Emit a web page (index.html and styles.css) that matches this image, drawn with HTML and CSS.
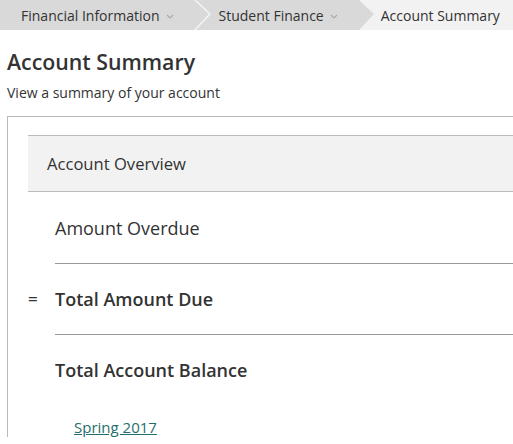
FILE: index.html
```html
<!DOCTYPE html>
<html lang="en">

<head>
    <meta charset="UTF-8">
    <title>Account Summary</title>
    <link rel="stylesheet" href="styles.css">
</head>

<body>
    <nav class="breadcrumb">
        <div class="crumb">
            Financial Information
            <svg class="caret" width="8" height="5" viewBox="0 0 8 5"><polyline points="1,1 4,4 7,1" fill="none" stroke="#aaa" stroke-width="1.2"/></svg>
        </div>
        <svg class="sep" width="20" height="30" viewBox="0 0 20 30"><rect width="20" height="30" fill="#d9d9d9"/><polyline points="0,-1 16,14 0,31" fill="none" stroke="#f4f4f4" stroke-width="1.5"/></svg>
        <div class="crumb">
            Student Finance
            <svg class="caret" width="8" height="5" viewBox="0 0 8 5"><polyline points="1,1 4,4 7,1" fill="none" stroke="#aaa" stroke-width="1.2"/></svg>
        </div>
        <svg class="sep" width="20" height="30" viewBox="0 0 20 30"><rect width="20" height="30" fill="#f2f2f2"/><polygon points="0,0 3,0 18,14 3,30 0,30" fill="#d9d9d9"/></svg>
        <div class="crumb current">Account Summary</div>
    </nav>

    <main class="page">
        <h1>Account Summary</h1>
        <p class="intro">View a summary of your account</p>

        <div class="summary-box">
            <div class="overview-head">Account Overview</div>

            <div class="row">
                <span class="op"></span>
                <span class="label">Amount Overdue</span>
            </div>
            <div class="row total">
                <span class="op">=</span>
                <span class="label">Total Amount Due</span>
            </div>
            <div class="row total last">
                <span class="op"></span>
                <span class="label">Total Account Balance</span>
            </div>

            <div class="terms">
                <a href="#">Spring 2017</a>
            </div>
        </div>
    </main>
</body>

</html>
```

FILE: styles.css
```css
body {
    margin: 0;
    font-family: "Open Sans", Arial, sans-serif;
    color: #333;
    background: #fff;
    overflow: hidden;
}

.breadcrumb {
    display: flex;
    height: 30px;
    background: #f2f2f2;
    font-size: 14px;
}

.crumb {
    display: flex;
    align-items: center;
    gap: 6px;
    background: #d9d9d9;
    padding: 0 20px 0 21px;
    white-space: nowrap;
}

.crumb + .sep + .crumb {
    padding: 0 18px 0 5px;
}

.crumb.current {
    background: #f2f2f2;
    padding-left: 9px;
    flex: 1;
}

.sep {
    display: block;
    flex: none;
}

.caret {
    margin-top: 2px;
}

.page {
    padding: 0 0 0 7px;
}

h1 {
    margin: 17px 0 0;
    font-size: 21.3px;
    font-weight: 600;
    line-height: 30px;
}

.intro {
    margin: 6px 0 0;
    font-size: 14px;
    line-height: 20px;
}

.summary-box {
    margin-top: 13px;
    border-top: 1px solid #bbb;
    border-left: 1px solid #bbb;
    padding: 18px 0 0 20px;
}

.overview-head {
    background: #f2f2f2;
    border-top: 1px solid #bbb;
    border-bottom: 1px solid #bbb;
    height: 55px;
    line-height: 55px;
    padding-left: 19px;
    font-size: 16.6px;
}

.row {
    display: flex;
    align-items: center;
    height: 71px;
    font-size: 18px;
}

.row + .row .label {
    border-top: 1px solid #999;
}

.row .op {
    width: 27px;
    flex: none;
    font-size: 17px;
}

.row .label {
    flex: 1;
    align-self: stretch;
    display: flex;
    align-items: center;
}

.row.total {
    font-weight: 600;
}

.terms {
    padding: 12px 0 0 46px;
    font-size: 15px;
}

.terms a {
    color: #1f6e6e;
}
```
